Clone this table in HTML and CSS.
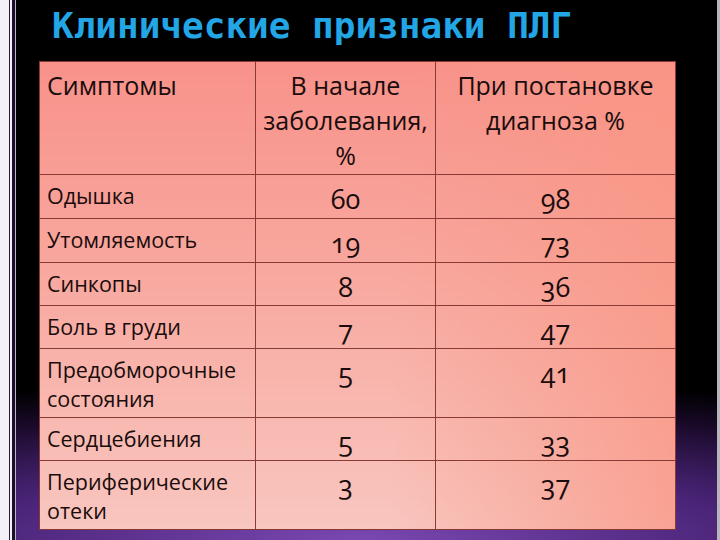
FILE: index.html
```html
<!DOCTYPE html>
<html lang="ru">
<head>
<meta charset="utf-8">
<title>Клинические признаки ПЛГ</title>
<link rel="stylesheet" href="styles.css">
</head>
<body>
<div class="slide">
  <h1 class="title">Клинические признаки ПЛГ</h1>
  <table class="grid">
    <tr class="r-head">
      <th class="c1">Симптомы</th>
      <th class="c2">В начале заболевания, %</th>
      <th class="c3">При постановке диагноза %</th>
    </tr>
    <tr class="r44"><td class="name">Одышка</td><td class="num">60</td><td class="num">98</td></tr>
    <tr class="r44"><td class="name">Утомляемость</td><td class="num">19</td><td class="num">73</td></tr>
    <tr class="r43"><td class="name">Синкопы</td><td class="num">8</td><td class="num">36</td></tr>
    <tr class="r43"><td class="name">Боль в груди</td><td class="num">7</td><td class="num">47</td></tr>
    <tr class="r69"><td class="name">Предобморочные состояния</td><td class="num">5</td><td class="num">41</td></tr>
    <tr class="r43"><td class="name">Сердцебиения</td><td class="num">5</td><td class="num">33</td></tr>
    <tr class="r69"><td class="name">Периферические отеки</td><td class="num">3</td><td class="num">37</td></tr>
  </table>
</div>
</body>
</html>
```

FILE: styles.css
```css
html, body {
  margin: 0;
  padding: 0;
  width: 720px;
  height: 540px;
  overflow: hidden;
}
body {
  background:
    linear-gradient(to right, #f4f0f8 0 9px, #2a1c3a 9px 10px, #f4f0f8 10px 12px, #1c1028 12px 15px, #bdb2c8 15px 16px, transparent 16px),
    linear-gradient(to left, #b8b4bc 0 3px, transparent 3px),
    radial-gradient(ellipse 120% 30% at 50% 100%, #7a48b2 0%, #4a2478 45%, #1a0a2a 80%, #000 100%),
    #000;
}
.slide {
  display: flex;
  flex-direction: column;
  padding-left: 39px;
}
.title {
  margin: 0;
  padding: 4px 0 0 13px;
  height: 44px;
  font-family: "DejaVu Sans Mono", monospace;
  font-weight: bold;
  font-size: 36px;
  line-height: 44px;
  color: #22a6e6;
  white-space: pre;
}
.grid {
  margin-top: 13px;
  width: 637px;
  border-collapse: collapse;
  table-layout: fixed;
  font-family: "Open Sans", "Noto Sans", sans-serif;
  color: #1a0c0c;
  background:
    linear-gradient(to right, rgba(248,160,140,0) 55%, rgba(249,150,132,0.75) 100%),
    linear-gradient(to bottom, #f8928a 0%, #f8a89f 45%, #f8c6bf 100%);
  border: 1px solid #7a2e2a;
}
.grid th, .grid td {
  border: 1px solid #8a3a34;
  vertical-align: top;
  padding: 6px 7px 0 7px;
}
.grid th {
  font-weight: normal;
  font-size: 25px;
  line-height: 35px;
  letter-spacing: 0;
}
.c1 { width: 201px; text-align: left; }
.c2 { width: 165px; text-align: center; }
.c3 { text-align: center; }
.r-head { height: 113px; }
.r44 { height: 44px; }
.r43 { height: 43px; }
.r69 { height: 69px; }
.name {
  font-size: 21.5px;
  line-height: 29px;
}
.num {
  text-align: center;
  font-size: 27px;
  line-height: 35px;
  font-variant-numeric: oldstyle-nums;
}
```
